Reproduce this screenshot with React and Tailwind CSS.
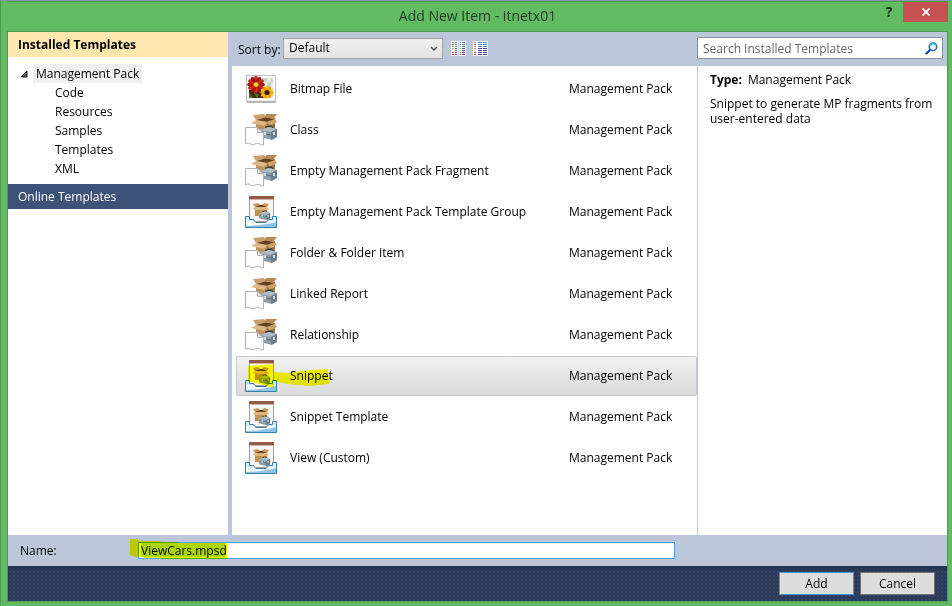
import React from "react";

const templates = [
  { name: "Bitmap File", icon: "bitmap" },
  { name: "Class", icon: "box" },
  { name: "Empty Management Pack Fragment", icon: "box" },
  { name: "Empty Management Pack Template Group", icon: "tray" },
  { name: "Folder & Folder Item", icon: "box" },
  { name: "Linked Report", icon: "box" },
  { name: "Relationship", icon: "box" },
  { name: "Snippet", icon: "tray", selected: true },
  { name: "Snippet Template", icon: "tray" },
  { name: "View (Custom)", icon: "tray" },
];

const categories = ["Code", "Resources", "Samples", "Templates", "XML"];
const petals = [0, 30, 60, 90, 120, 150, 180, 210, 240, 270, 300, 330];
const dots = ["#4ba584", "#e33a2a", "#e8842a", "#8cc03a", "#e6d52a", "#e33a2a", "#e33a2a"];

function BitmapIcon() {
  return (
    <svg width="32" height="32" viewBox="0 0 32 32" aria-hidden="true">
      <path d="M2 29h29" stroke="#999" strokeWidth="1.5" />
      <rect x="1.5" y="2.5" width="29" height="25.5" fill="#fff" stroke="#bdbdbd" />
      <rect x="4" y="5" width="24" height="20" fill="#e7eee3" />
      <path d="M18 5h4v4h4v4h-4v-4h-4zM26 5h2v4h-2zM22 13h4v4h-4z" fill="#c2d3bf" />
      <path d="M4 17h11l4 8H4z" fill="#4a2c10" />
      <path d="M4 20l4 5H4zM9 20l5 2-2 3z" fill="#4d7a28" />
      <g transform="translate(11 11.5)">
        {petals.map((a) => (
          <ellipse key={a} cx="0" cy="-5" rx="2" ry="3.8" fill={a % 60 ? "#a41616" : "#c92a1c"} transform={`rotate(${a})`} />
        ))}
        <circle r="2.6" fill="#e99a13" />
        <circle r="1.5" fill="#f7df3d" />
      </g>
      <g transform="translate(22 19.5)">
        {petals.map((a) => (
          <ellipse key={a} cx="0" cy="-4" rx="1.5" ry="2.8" fill={a % 60 ? "#ec9a0c" : "#fdbb22"} transform={`rotate(${a})`} />
        ))}
        <circle r="2.6" fill="#3a1c10" />
      </g>
      <path d="M3 26.500h26" stroke="#fff" strokeWidth="2" />
    </svg>
  );
}

function CartonArt() {
  return (
    <g>
      <path d="M11 6l19-2v13l-9 4-10-4z" fill="#bd915d" />
      <path d="M22 8l8-4v13l-8 3z" fill="#9b7040" />
      <path d="M11 6l9-3 10 2-9 3z" fill="#65431f" />
      <path d="M11 6L8 1l11-1 3 3z" fill="#c9a06d" />
      <path d="M20 3l1-3h11l-4 5z" fill="#b78a55" />
      <path d="M11 6l11 2-3 4L6 9z" fill="#deb988" />
      <path d="M22 8l8-3 2 3-7 4z" fill="#cda26c" />
    </g>
  );
}

function ToolboxArt() {
  return (
    <g>
      <path d="M21 15v-2l5-1 2 2" fill="none" stroke="#30363b" strokeWidth="1.5" />
      <path d="M15 16l9-3 8 2v8l-5 3-12-3z" fill="#8b9daa" />
      <path d="M15 16l9-3 8 2-6 3z" fill="#aebcc6" />
      <path d="M26 18l6-3v8l-6 3z" fill="#6d7f8c" />
      <path d="M16 19l10 2 6-3" fill="none" stroke="#5a6b78" />
      <path d="M19 18h2v3h-2zM28 18h2v3h-2z" fill="#d3dce2" />
    </g>
  );
}

function BoxIcon() {
  return (
    <svg width="32" height="32" viewBox="0 0 32 32" aria-hidden="true">
      <CartonArt />
      <ToolboxArt />
      <path d="M.5 13.500h12v4l6 1v12.500c-3 .5-4-2.500-7-1.500s-4 2-6 .5-3-1-5 0z" fill="#fcfcfc" stroke="#b2b2b2" />
      <path d="M12.500 13.500l5.500 5h-5.500z" fill="#e6e6e6" stroke="#b2b2b2" />
    </svg>
  );
}

function TrayIcon() {
  return (
    <svg width="32" height="32" viewBox="0 0 32 32" aria-hidden="true">
      <rect x="4.500" y=".5" width="24" height="25" fill="#faf7f4" stroke="#a99c95" />
      <path d="M4 0h25v3H4z" fill="#935b45" />
      <path d="M5 3h23v1H5z" fill="#d5b3a4" />
      <path d="M10 11h12v9H10z" fill="#c1934f" />
      <path d="M10 11l2-2h8l2 2z" fill="#6d4620" />
      <path d="M10 11L8 8l5-1 2 2zM22 11l2-3-5-1-2 2z" fill="#c4985f" />
      <path d="M8 13l2-2h12l2 2-3 1H11z" fill="#e0b77b" />
      <g transform="translate(4 7) scale(.66)"><ToolboxArt /></g>
      <path d="M.5 20.500h4v3h4l2 3h11l2-3h4v-3h4v11H.5z" fill="#d6ecf9" stroke="#397fae" />
      <path d="M1 25h8l2 2h10l2-2h8v2c-11 0-19 3-30 3z" fill="#f3faff" />
      <path d="M1 30c10 0 19-1 30-4v5H1z" fill="#8fc3e4" />
    </svg>
  );
}

function TemplateIcon({ kind }) {
  if (kind === "bitmap") return <BitmapIcon />;
  if (kind === "tray") return <TrayIcon />;
  return <BoxIcon />;
}

function ViewIcon({ wide }) {
  return (
    <svg width="15" height="15" viewBox="0 0 15 15" aria-hidden="true" shapeRendering="crispEdges">
      <path d={wide ? "M0 0h15v15H0z" : "M0 0h7v15H0zM8 0h7v15H8z"} fill="#fff" />
      {dots.map((color, i) => {
        const y = i * 2 + 1;
        const line = i < 3 ? "#4682c8" : "#4b3fb5";
        return (
          <g key={i}>
            <rect x="1" y={y} width="2" height="1" fill={color} />
            {wide ? (
              <>
                <rect x="5" y={y} width="4" height="1" fill={line} />
                <rect x="10" y={y} width="4" height="1" fill={line} />
              </>
            ) : (
              <>
                <rect x="4" y={y} width="2" height="1" fill={line} />
                <rect x="9" y={y} width="1" height="1" fill={color} />
                <rect x="11" y={y} width="3" height="1" fill={line} />
              </>
            )}
          </g>
        );
      })}
    </svg>
  );
}

function TitleBar() {
  return (
    <header className="flex h-[30px] shrink-0 items-start border-t border-[#4f9a51]">
      <div className="w-[74px] shrink-0" />
      <h1 className="flex-1 pt-[2px] text-center text-[14px] leading-6 text-[#263b27]">Add New Item - itnetx01</h1>
      <div className="flex w-[74px] shrink-0 justify-end">
        <button aria-label="Help" className="h-5 w-7 text-sm font-bold leading-5 text-[#16261a]">?</button>
        <button aria-label="Close" className="flex h-5 w-[45px] items-center justify-center bg-[#c75050] text-white">
          <svg width="8" height="8" viewBox="0 0 8 8" aria-hidden="true">
            <path d="M.5 .5l7 7M7.500 .5l-7 7" stroke="currentColor" strokeWidth="1.700" />
          </svg>
        </button>
      </div>
    </header>
  );
}

function Sidebar() {
  return (
    <nav className="w-[220px] shrink-0 bg-white">
      <h2 className="h-[25px] bg-[#ffe8af] px-[10px] font-bold leading-[25px]">Installed Templates</h2>
      <div className="pb-[6px] pt-[7px]">
        <button className="ml-3 flex h-[19px] items-center">
          <svg width="8" height="8" viewBox="0 0 8 8" aria-hidden="true">
            <path d="M7 1v6H1z" fill="#555" stroke="#222" />
          </svg>
          <span className="ml-[5px] bg-[#f0f0f0] px-[3px] leading-[19px]">Management Pack</span>
        </button>
        <ul>
          {categories.map((c) => (
            <li key={c} className="h-[19px] leading-[19px]">
              <button className="pl-[47px]">{c}</button>
            </li>
          ))}
        </ul>
      </div>
      <button className="block h-[25px] w-full bg-[#3d5277] px-[10px] text-left leading-[25px] text-white">Online Templates</button>
    </nav>
  );
}

function Toolbar() {
  return (
    <div className="flex h-[34px] shrink-0 items-center pb-[2px] pl-[10px] pr-1">
      <label htmlFor="sort" className="w-[45px] shrink-0 pt-1">Sort by:</label>
      <div className="relative">
        <select id="sort" className="block h-[21px] w-[160px] appearance-none border border-[#a5a5a5] bg-linear-to-b from-[#f0f0f0] to-[#e4e4e4] pl-[5px] outline-none">
          <option>Default</option>
        </select>
        <svg className="pointer-events-none absolute right-[5px] top-2" width="8" height="6" viewBox="0 0 8 6" aria-hidden="true">
          <path d="M1 1l3 3 3-3" fill="none" stroke="#555" strokeWidth="1.500" />
        </svg>
      </div>
      <button aria-label="Small icons" className="ml-2"><ViewIcon /></button>
      <button aria-label="Medium icons" className="ml-[7px]"><ViewIcon wide /></button>
      <div className="ml-auto flex h-[22px] w-[246px] items-center border border-[#8591a8] bg-white pl-[5px] pr-1">
        <input type="search" aria-label="Search Installed Templates" placeholder="Search Installed Templates" className="min-w-0 flex-1 pt-[2px] outline-none placeholder:text-[#666]" />
        <svg width="13" height="13" viewBox="0 0 13 13" aria-hidden="true">
          <path d="M1.500 11.500L5 8" stroke="#244c9b" strokeWidth="2.400" strokeLinecap="round" />
          <circle cx="8" cy="4.800" r="3.700" fill="#f5fbff" stroke="#2b6fb5" strokeWidth="1.700" />
          <path d="M5 3a3.700 3.700 0 0 1 6 0" fill="none" stroke="#35a8d8" strokeWidth="1.700" />
        </svg>
      </div>
    </div>
  );
}

function TemplateList() {
  return (
    <ul className="min-w-0 flex-1 pl-1 pt-[3px]">
      {templates.map((t) => (
        <li key={t.name} className="h-[41px]">
          <button
            className={
              t.selected
                ? "relative flex h-10 w-full items-center rounded-xs border border-[#c8c8c8] bg-linear-to-b from-[#f2f2f2] to-[#dadada] pl-2 text-left"
                : "flex h-10 w-full items-center border border-transparent pl-2 text-left"
            }
          >
            <TemplateIcon kind={t.icon} />
            <span className="ml-[13px] flex-1">{t.name}</span>
            <span className="w-[127px]">Management Pack</span>
            {t.selected && (
              <svg className="absolute left-[10px] top-[6px] mix-blend-multiply" width="84" height="26" viewBox="0 0 84 26" aria-hidden="true">
                <path d="M1 3L27 1v8l15 1 21-3 18-1 1 15-20 2-21-2-14-3v7L1 18z" fill="#ffff00" />
              </svg>
            )}
          </button>
        </li>
      ))}
    </ul>
  );
}

function Details() {
  return (
    <section className="w-[250px] shrink-0 border-l border-[#bbc7d8] px-3 pt-[6px]">
      <p className="leading-4"><b>Type:</b><span className="ml-[6px]">Management Pack</span></p>
      <p className="mt-2 leading-[15px]">Snippet to generate MP fragments from user-entered data</p>
    </section>
  );
}

function NameBar() {
  return (
    <div className="flex h-[31px] shrink-0 items-center bg-[#bbc7d8] pl-3">
      <label htmlFor="name" className="w-[118px]">Name:</label>
      <div className="relative">
        <input id="name" defaultValue="ViewCars.mpsd" className="block h-[17px] w-[537px] border border-[#569de5] bg-white pl-[2px] outline-none" />
        <svg className="pointer-events-none absolute -left-2 -top-1 mix-blend-multiply" width="98" height="22" viewBox="0 0 98 22" aria-hidden="true">
          <path d="M0 1h7l3 2h20l2 1h16v1h49v16H32l-1-1H14l-2-1H6l-6-2z" fill="#ffff00" />
          <path d="M11 5h84v14H11z" fill="#abd600" />
        </svg>
      </div>
    </div>
  );
}

function Footer() {
  return (
    <footer className="flex h-[35px] shrink-0 items-center justify-end gap-[6px] bg-[#2b3b58] bg-[radial-gradient(#33476a_1px,transparent_1px)] bg-size-[4px_4px] pr-3 shadow-[inset_0_3px_3px_#24334e]">
      <button className="h-[23px] w-[75px] border border-[#3399ff] bg-[#dddddd]">Add</button>
      <button className="h-[23px] w-[75px] border border-[#707070] bg-[#dddddd]">Cancel</button>
    </footer>
  );
}

export default function App() {
  return (
    <main className="flex min-h-screen flex-col border-l border-t border-l-[#4f9a51] border-t-[#8796a8] bg-[#62bb62] pb-1 pl-[6px] pr-1 font-['Open_Sans','Noto_Sans',sans-serif] text-xs text-black">
      <TitleBar />
      <div className="flex flex-1 flex-col border border-[#4b9c4e]">
        <div className="flex flex-1 bg-[#bbc7d8]">
          <Sidebar />
          <div className="flex min-w-0 flex-1 flex-col">
            <Toolbar />
            <div className="ml-1 flex flex-1 bg-white">
              <TemplateList />
              <Details />
            </div>
          </div>
        </div>
        <NameBar />
        <Footer />
      </div>
    </main>
  );
}
